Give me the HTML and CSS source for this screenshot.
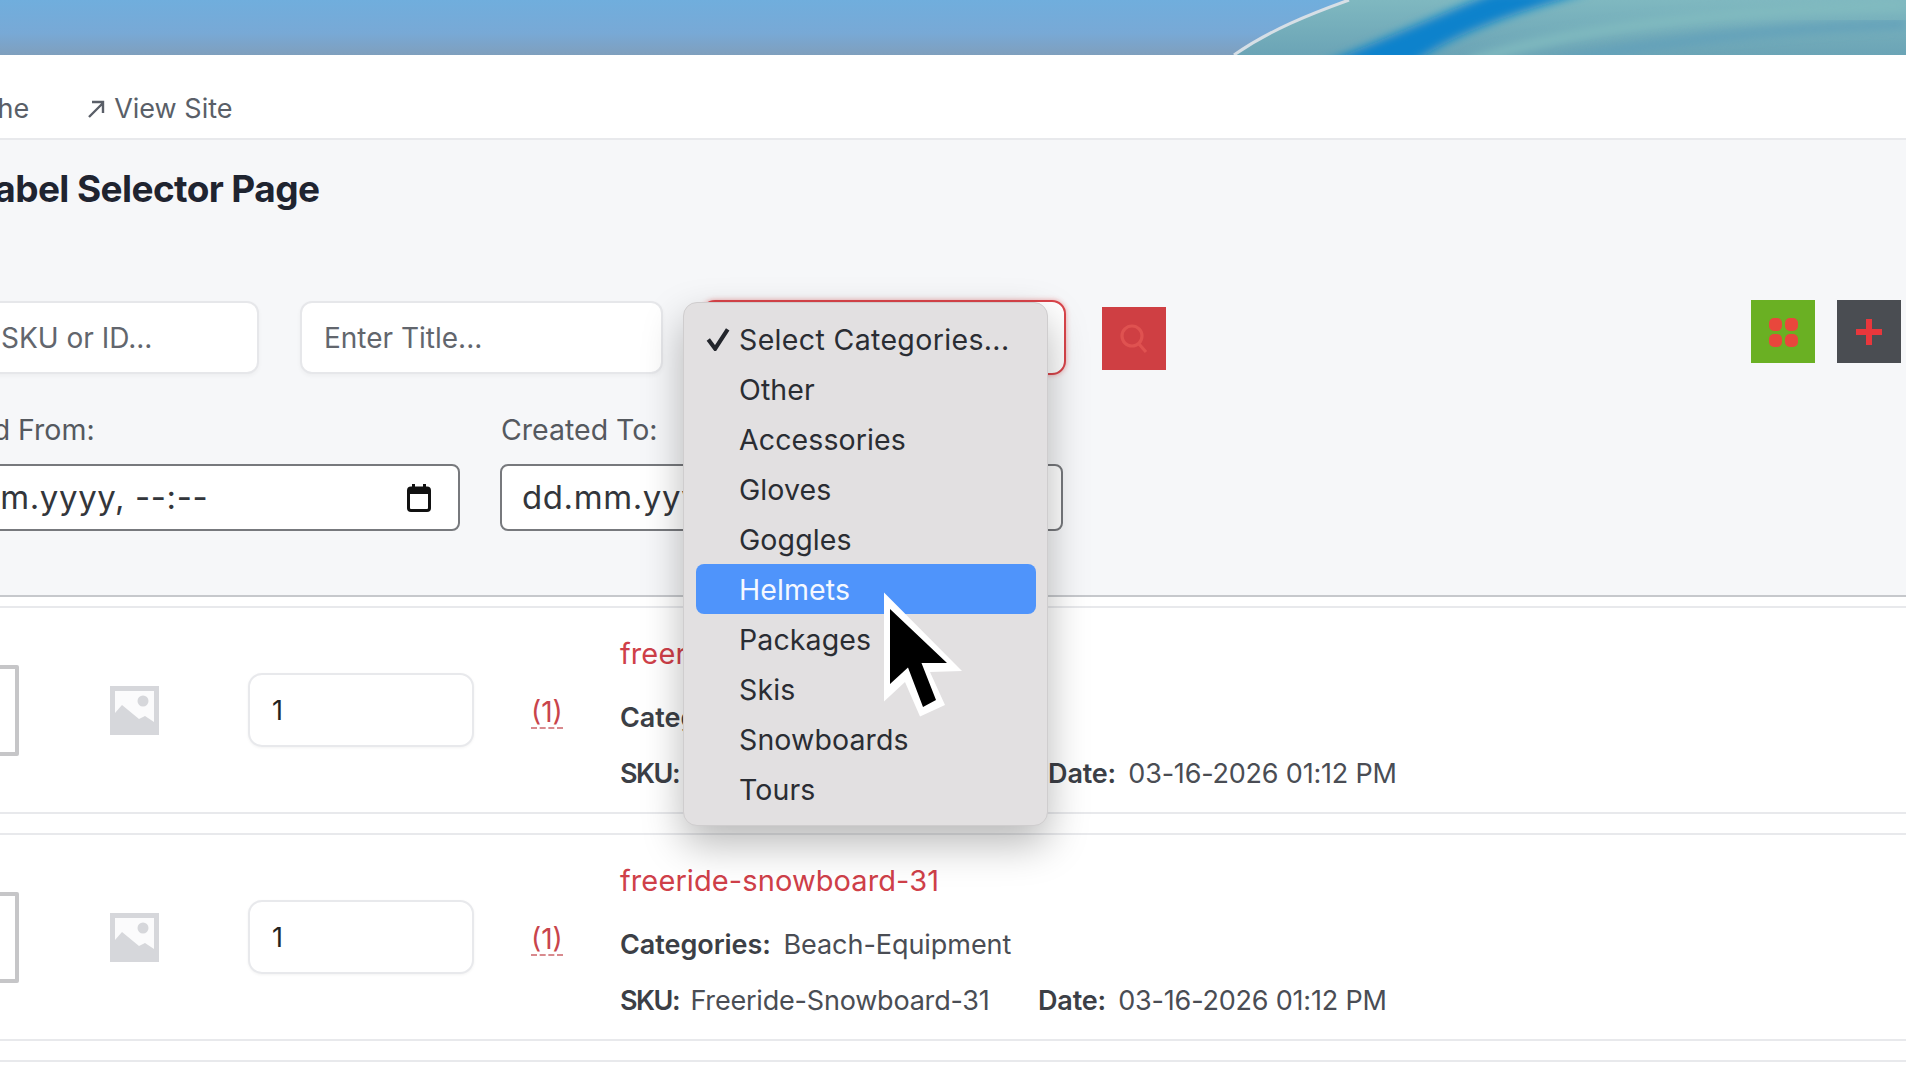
FILE: index.html
```html
<!DOCTYPE html>
<html lang="en">
<head>
    <meta charset="UTF-8">
    <title>Label Selector Page</title>
    <link rel="stylesheet" href="styles.css">
</head>
<body>
    <div class="page">
        <div class="banner">
            <svg class="banner-art" width="2066" height="55" viewBox="-160 0 2066 55">
                <defs>
                    <linearGradient id="sky" x1="0" y1="0" x2="0" y2="1">
                        <stop offset="0" stop-color="#70aedd"/>
                        <stop offset="0.6" stop-color="#78a9d6"/>
                        <stop offset="1" stop-color="#7f9fbd"/>
                    </linearGradient>
                    <linearGradient id="teal" x1="0" y1="0" x2="0" y2="1">
                        <stop offset="0" stop-color="#7fb8c0"/>
                        <stop offset="1" stop-color="#6ba4b6"/>
                    </linearGradient>
                    <filter id="soft"><feGaussianBlur stdDeviation="5"/></filter>
                </defs>
                <rect x="-160" y="0" width="2066" height="55" fill="url(#sky)"/>
                <path d="M1234 55 C1270 30 1310 14 1349 0 H1906 V55 Z" fill="url(#teal)"/>
                <path d="M1322 64 C1380 42 1440 14 1495 -8 L1590 -8 C1520 10 1450 35 1412 64 Z" fill="#0f82cc" filter="url(#soft)"/>
                <path d="M1470 62 C1560 30 1720 10 1906 6" stroke="#82bcc0" stroke-width="9" fill="none" filter="url(#soft)"/>
                <path d="M1560 62 C1650 42 1780 28 1906 24" stroke="#62a0ba" stroke-width="9" fill="none" filter="url(#soft)"/>
                <path d="M1234 55 C1270 30 1310 14 1349 0" stroke="#d6dfe6" stroke-width="3" fill="none"/>
            </svg>
        </div>

        <div class="topbar">
            <a class="top-link">Clear Cache</a>
            <a class="top-link">
                <svg class="arrow-icon" width="20" height="20" viewBox="0 0 20 20"><path d="M3 18 L17 4 M6 3 H17 V14" fill="none" stroke="#5a5f68" stroke-width="2.400"/></svg>
                View Site
            </a>
        </div>

        <div class="content">
            <h1 class="page-title">Label Selector Page</h1>

            <div class="filter-row">
                <input class="text-field" type="text" placeholder="Enter SKU or ID...">
                <input class="text-field" type="text" placeholder="Enter Title...">
                <select class="cat-select"><option></option></select>
                <button class="btn btn-search">
                    <svg width="30" height="32" viewBox="0 0 30 32"><circle cx="13" cy="13" r="10" fill="none" stroke="#df5250" stroke-width="3.200"/><path d="M20 21 L27 29" stroke="#df5250" stroke-width="3.200"/></svg>
                </button>
                <div class="action-group">
                    <button class="btn btn-grid">
                        <svg width="30" height="30" viewBox="0 0 30 30"><rect x="1" y="1" width="13" height="13" rx="5" fill="#e8473c"/><rect x="17" y="1" width="13" height="13" rx="5" fill="#e8473c"/><rect x="1" y="17" width="13" height="13" rx="5" fill="#e8473c"/><rect x="17" y="17" width="13" height="13" rx="5" fill="#e8473c"/></svg>
                    </button>
                    <button class="btn btn-add">
                        <svg width="26" height="28" viewBox="0 0 26 28"><path d="M13 1 V27 M0 14 H26" stroke="#e8373c" stroke-width="6"/></svg>
                    </button>
                </div>
            </div>

            <div class="date-row">
                <div class="date-group">
                    <label class="date-label">Created From:</label>
                    <div class="date-field">
                        <span>dd.mm.yyyy, --:--</span>
                        <svg width="24" height="28" viewBox="0 0 24 28"><rect x="1.500" y="4" width="21" height="22.500" rx="2.500" fill="none" stroke="#111" stroke-width="3"/><rect x="1.500" y="4" width="21" height="6" fill="#111"/><path d="M6.500 0 V5 M17.500 0 V5" stroke="#111" stroke-width="3"/></svg>
                    </div>
                </div>
                <div class="date-group">
                    <label class="date-label">Created To:</label>
                    <div class="date-field">
                        <span>dd.mm.yyyy, --:--</span>
                    </div>
                </div>
            </div>
        </div>

        <div class="list">
            <div class="list-row">
                <div class="check-box"></div>
                <svg class="thumb" width="49" height="49" viewBox="0 0 49 49"><use href="#placeholder"/></svg>
                <input class="qty-field" type="text" value="1">
                <a class="count-link">(1)</a>
                <div class="row-info">
                    <a class="row-name">freeride-snowboard-30</a>
                    <div class="row-line row-cats"><b>Categories:</b> Beach-Equipment</div>
                    <div class="row-line"><b class="sku-key">SKU:</b> Freeride-Snowboard-30 <b class="date-key">Date:</b> 03-16-2026 01:12 PM</div>
                </div>
            </div>
            <div class="list-row">
                <div class="check-box"></div>
                <svg class="thumb" width="49" height="49" viewBox="0 0 49 49">
                    <g id="placeholder">
                        <rect width="49" height="49" fill="#d6d7db"/>
                        <path d="M5 5 H44 V36 L35 30 L29 33 L12 19 L5 27 Z" fill="#fbfbfc"/>
                        <circle cx="33" cy="15" r="5.500" fill="#d6d7db"/>
                    </g>
                </svg>
                <input class="qty-field" type="text" value="1">
                <a class="count-link">(1)</a>
                <div class="row-info">
                    <a class="row-name">freeride-snowboard-31</a>
                    <div class="row-line row-cats"><b>Categories:</b> Beach-Equipment</div>
                    <div class="row-line"><b class="sku-key">SKU:</b> Freeride-Snowboard-31 <b class="date-key">Date:</b> 03-16-2026 01:12 PM</div>
                </div>
            </div>
            <div class="list-row"></div>
        </div>
    </div>

    <!-- open native select menu -->
    <div class="select-menu">
        <div class="menu-item"><svg class="menu-check" width="24" height="24" viewBox="0 0 21 21"><path d="M2 11 L8 19 L19 2" fill="none" stroke="#23262c" stroke-width="3.600"/></svg>Select Categories...</div>
        <div class="menu-item">Other</div>
        <div class="menu-item">Accessories</div>
        <div class="menu-item">Gloves</div>
        <div class="menu-item">Goggles</div>
        <div class="menu-item active">Helmets</div>
        <div class="menu-item">Packages</div>
        <div class="menu-item">Skis</div>
        <div class="menu-item">Snowboards</div>
        <div class="menu-item">Tours</div>
    </div>

    <svg class="cursor" width="80" height="126" viewBox="884 592 80 126">
        <path d="M884 592.500 L884 701.500 L905 682 L920 716.500 L945 705 L930 672 L962 671 Z" fill="#fff"/>
        <path d="M890 609 L890 684 L908 667.500 L923 707 L936 700 L921.500 663 L947 663 Z" fill="#000"/>
    </svg>
</body>
</html>
```

FILE: styles.css
```css
* {
    margin: 0;
    padding: 0;
    box-sizing: border-box;
}

html, body {
    height: 1080px;
    overflow: hidden;
}

body {
    position: relative;
    font-family: 'Inter', 'Liberation Sans', sans-serif;
    background: white;
    color: #3d4148;
}

.page {
    width: 2066px;
    margin-left: -160px;
}

.banner {
    height: 55px;
}

.banner-art {
    display: block;
}

.topbar {
    height: 85px;
    background: white;
    border-bottom: 2px solid #e8e9ec;
    display: flex;
    align-items: center;
    gap: 57px;
    padding-left: 32px;
    padding-top: 24px;
    font-size: 27px;
    color: #5a5f68;
}

.top-link {
    display: flex;
    align-items: center;
    gap: 8px;
}

.content {
    height: 457px;
    background: #f6f7f9;
    border-bottom: 2px solid #c6c8cc;
    padding: 29px 5px 0 57px;
}

.page-title {
    font-size: 37px;
    line-height: 40px;
    font-weight: 700;
    letter-spacing: -0.6px;
    color: #1f2430;
    margin-left: 77px;
    margin-bottom: 92px;
}

.filter-row {
    display: flex;
    align-items: flex-start;
    margin-bottom: 39px;
}

.text-field {
    width: 362px;
    height: 73px;
    margin-right: 41px;
    padding: 0 25px;
    background: white;
    border: 2px solid #e6e7ea;
    border-radius: 12px;
    font-family: inherit;
    font-size: 28px;
    outline: none;
    box-shadow: 0 2px 4px rgba(0, 0, 0, 0.04);
}

.text-field + .text-field {
    width: 363px;
    margin-right: 38px;
    padding: 0 22px;
}

.text-field::placeholder {
    color: #62666d;
}

.cat-select {
    width: 365px;
    height: 75px;
    margin-top: -1px;
    margin-right: 36px;
    appearance: none;
    background: white;
    border: 2px solid #d9444a;
    border-radius: 14px;
    box-shadow: 0 0 5px rgba(229, 62, 62, 0.45);
}

.btn {
    display: flex;
    align-items: center;
    justify-content: center;
    width: 64px;
    height: 63px;
    border: none;
}

.btn-search {
    margin-top: 6px;
    background: #cf3f43;
}

.action-group {
    display: flex;
    gap: 22px;
    margin-left: auto;
    margin-top: -1px;
}

.btn-grid {
    background: #6ab023;
}

.btn-add {
    background: #4a4d52;
}

.date-row {
    display: flex;
    gap: 40px;
}

.date-group {
    width: 563px;
}

.date-label {
    display: block;
    font-size: 28.500px;
    line-height: 32px;
    color: #55595f;
    margin-bottom: 18px;
    padding-left: 1px;
}

.date-group:first-child .date-label {
    padding-left: 6px;
}

.date-field {
    height: 67px;
    padding: 0 27px 0 20px;
    background: white;
    border: 2px solid #77797d;
    border-radius: 8px;
    display: flex;
    align-items: center;
    justify-content: space-between;
    font-size: 33px;
    letter-spacing: 0.6px;
    color: #33363b;
}

.date-field span {
    margin-bottom: 2px;
}

.list {
    padding-top: 9px;
}

.list-row {
    height: 208px;
    margin-bottom: 19px;
    border-top: 2px solid #e8e9ec;
    border-bottom: 2px solid #e8e9ec;
    display: flex;
    align-items: center;
    padding-left: 89px;
}

.check-box {
    width: 90px;
    height: 91px;
    border: 4px solid #c6c6c8;
    border-radius: 2px;
    background: white;
    margin-right: 91px;
}

.thumb {
    display: block;
    margin-right: 89px;
}

.qty-field {
    width: 226px;
    height: 74px;
    padding: 0 22px;
    margin-right: 57px;
    border: 2px solid #e8e9ec;
    border-radius: 14px;
    font-family: inherit;
    font-size: 27px;
    color: #222;
    outline: none;
    box-shadow: 0 1px 3px rgba(0, 0, 0, 0.05);
}

.count-link {
    width: 32px;
    margin-right: 57px;
    margin-top: 5px;
    font-size: 28px;
    color: #c9444b;
    border-bottom: 2px dashed #d88a8e;
    line-height: 30px;
    white-space: nowrap;
}

.row-info {
    align-self: flex-start;
    padding-top: 28px;
}

.row-name {
    display: block;
    font-size: 29px;
    line-height: 36px;
    letter-spacing: 0.1px;
    color: #cf4049;
}

.row-line {
    font-size: 27px;
    line-height: 36px;
    letter-spacing: -0.2px;
    color: #4a4d54;
    margin-top: 20px;
    white-space: nowrap;
}

.row-cats {
    margin-top: 28px;
    letter-spacing: -0.050px;
}

.row-line b {
    font-weight: 600;
    color: #3c3f46;
    margin-right: 5px;
}

.row-line .sku-key {
    letter-spacing: -1.500px;
    margin-right: 4px;
}

.row-line .date-key {
    margin-left: 41px;
}

.list-row:first-child .date-key {
    margin-left: 45px;
}

.select-menu {
    position: absolute;
    left: 683px;
    top: 302px;
    width: 365px;
    height: 524px;
    padding: 11px 11px 11px 12px;
    background: #e2e0e1;
    border: 1px solid #cfcdce;
    border-radius: 14px;
    box-shadow: 0 18px 40px rgba(0, 0, 0, 0.28);
}

.menu-item {
    position: relative;
    height: 50px;
    line-height: 51px;
    padding-left: 43px;
    border-radius: 8px;
    font-size: 28.500px;
    letter-spacing: 0.1px;
    color: #2a2d33;
    white-space: nowrap;
}

.menu-item:first-child {
    letter-spacing: 0.350px;
}

.menu-item.active {
    background: #4f94fb;
    color: #f4f8ff;
}

.menu-check {
    position: absolute;
    left: 10px;
    top: 13px;
}

.cursor {
    position: absolute;
    left: 884px;
    top: 592px;
}
```
